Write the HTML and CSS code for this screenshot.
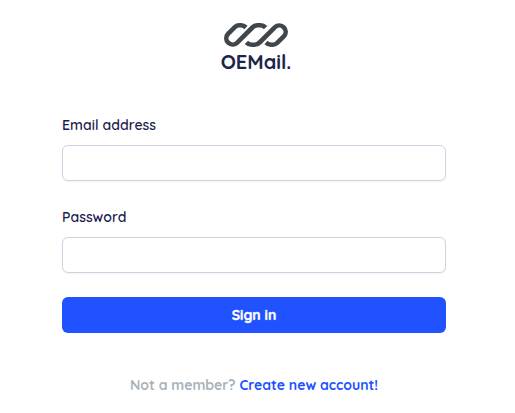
FILE: index.html
```html
<!DOCTYPE html>
<html lang="en">
<head>
<meta charset="utf-8">
<title>OEMail</title>
<link rel="stylesheet" href="styles.css">
</head>
<body>
<main class="login">
  <header class="brand">
    <svg class="logo" viewBox="0 0 64 24" width="64" height="24" aria-hidden="true">
      <path d="M22 4.5Q19.8 2.3 17 2.3H15.3Q12.7 2.3 10.8 4.1L4 10.9A6.37 6.37 0 0 0 13 19.9L28.4 4.5Q30.6 2.3 33.4 2.3H36.5Q39.5 2.3 41.6 4.6"/>
      <path d="M42 19.5Q44.2 21.7 47 21.7H48.7Q51.3 21.7 53.2 19.9L60 13.1A6.37 6.37 0 0 0 51 4.1L35.6 19.5Q33.4 21.7 30.6 21.7H27.5Q24.5 21.7 22.4 19.4"/>
    </svg>
    <h1 class="name">OEMail.</h1>
  </header>
  <form class="form">
    <label class="label" for="email">Email address</label>
    <input class="input" id="email" type="email">
    <label class="label" for="password">Password</label>
    <input class="input" id="password" type="password">
    <button class="submit" type="button">Sign in</button>
  </form>
  <p class="signup"><span class="question">Not a member?</span> <a class="create">Create new account!</a></p>
</main>
</body>
</html>
```
FILE: styles.css
```css
* { box-sizing: border-box; }
body {
  margin: 0;
  background: #fff;
  color: #1b1b4f;
  font-family: Quicksand, Lato, sans-serif;
}
.login { width: 384px; margin-left: 62px; padding-top: 23px; }
.brand { display: flex; flex-direction: column; align-items: center; padding-left: 4px; }
.logo { display: block; fill: none; stroke: #3f474d; stroke-width: 4.6; }
.name { margin: 1px 0 0; font-size: 20px; line-height: 28px; font-weight: 700; color: #1b254b; }
.form { display: flex; flex-direction: column; margin-top: 39px; }
.label { font-size: 14px; line-height: 20px; font-weight: 600; letter-spacing: .05px; margin-bottom: 10px; }
.input {
  width: 100%;
  height: 36px;
  padding: 0 12px;
  margin: 0 0 26px;
  border: 1px solid #cbd5e1;
  border-radius: 6px;
  background: #fff;
  box-shadow: 0 1px 2px rgba(0, 0, 0, .05);
  font: inherit;
}
.submit {
  height: 36px;
  margin-top: -2px;
  border: 0;
  border-radius: 6px;
  background: #2152ff;
  color: #fff;
  font: 700 14px/20px Quicksand, Lato, sans-serif;
  -webkit-text-stroke: .35px #fff;
}
.signup { margin: 42px 0 0; text-align: center; font-size: 14px; line-height: 20px; font-weight: 700; letter-spacing: -.03px; white-space: nowrap; }
.question { color: #a8b3b9; }
.create { color: #2152ff; }
```
